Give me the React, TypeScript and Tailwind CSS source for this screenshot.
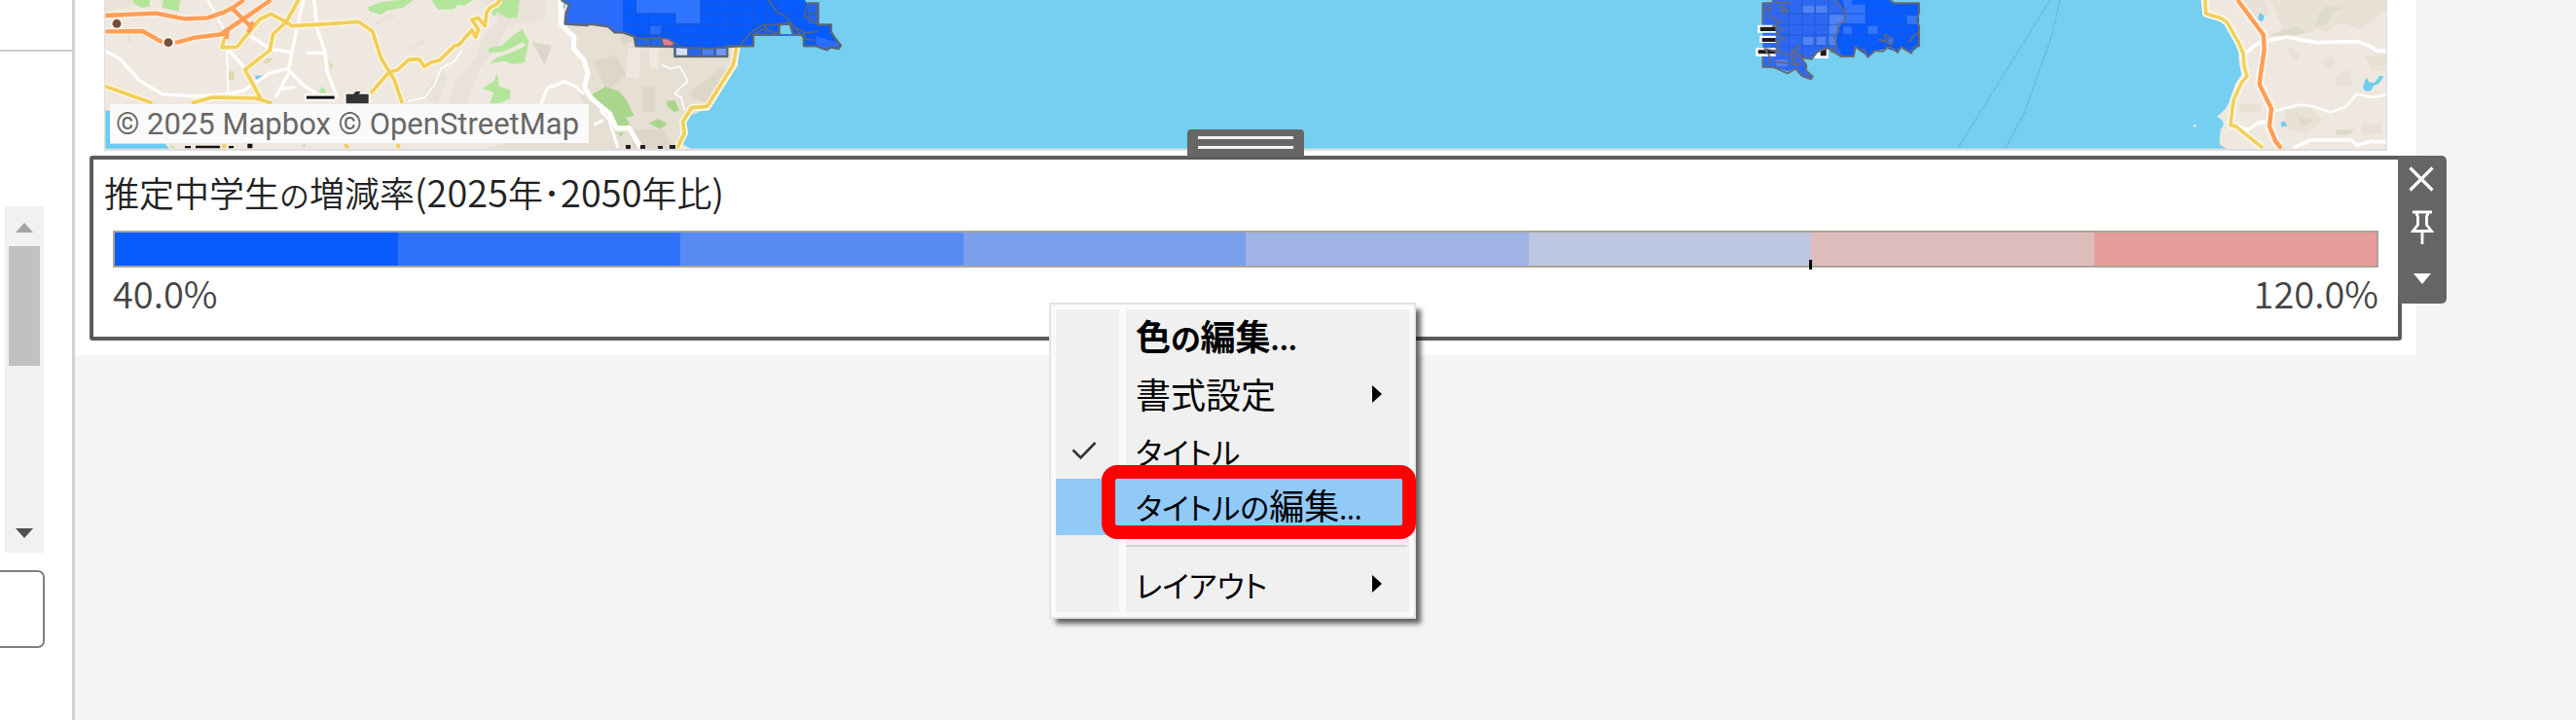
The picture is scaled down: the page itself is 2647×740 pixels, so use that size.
import type { ReactNode } from "react";

const legendSteps = [
  "bg-[#0a5cff]",
  "bg-[#3073fa]",
  "bg-[#568bf3]",
  "bg-[#7c9fec]",
  "bg-[#9fb3e4]",
  "bg-[#bdc6e0]",
  "bg-[#dfbcbc]",
  "bg-[#e69c9c]",
];

const yellowRoads = [
  "M325 266L470 318M590 318L655 300L790 303L838 318M920 0L882 68L842 105L832 155L755 215L805 306",
  "M700 90L684 146L730 145L800 60L835 43L882 68L900 80L1010 74L1105 67L1148 96L1175 180L1215 245L1240 318",
  "M1140 290L1200 222L1225 216L1260 184L1292 182L1308 205L1330 192L1355 186L1400 142L1415 138L1455 92L1466 115L1475 92L1455 60L1475 56L1495 80L1500 38L1512 22L1530 14L1542 0",
];

function WestLand() {
  return (
    <g transform="scale(0.33333)" fill="none" strokeLinejoin="round" strokeLinecap="butt">
      <g fill="#e9e2d8">
        <path d="M325 0h95l-20 24-75 8zM480 0h60l-10 18zM1150 70l60-30 10 12-60 28zM1255 150l50-28 5 10-45 20zM390 130l8-30 8 30zM1400 250l60-60 30-80 60-60 20 20-40 80-50 60-40 110-60 30zM1480 0h200v60l-120 20zM1300 300l60-90 20 30-30 80z" />
      </g>
      <path d="M1730 0L2275 150L2265 220L2180 330L2110 370L2090 458L1500 458L1700 400L1810 240L1760 110Z" fill="#e6dfd3" />
      <path d="M1830 190l70-20 30 60-60 50zM1980 265h40v80h-40zM2120 290l100-80 30 10-70 100zM1900 70l60 50-40 20zM1640 130l60 10-20 60zM1950 400l100 0 20 58h-120z" fill="#ddd6c9" />
      <path d="M1935 150l40 0-5 90-40 0zM2000 150l30 0 0 60-25 0zM1700 300l80-20 20 40-60 60zM1600 200l100 0 0 20-60 10z" fill="#efe8e0" />
      <g fill="#b3e59a">
        <path d="M410 0h52l-2 20-25 4-22-12zM503 0h52l-4 36-30-8-22-4zM1135 22l40-16 60-6h38l-30 24-50 8-20 14-36-14zM1330 0h130l-30 18-20-4-10 14-50 2zM1530 0h72l-8 55-32 0-30-18zM983 284l10-18 14 18-6 4z" />
        <path d="M1506 148l42-8 30-28 32-22 20 36-12 66-34 6-30-10-46 8 24-18 50-18 40-20-10-10-60 30-44 2zM1688 0z" />
        <path d="M1486 272l36-20 12-26 4 40 36 12-2 26-30 14h-32l12-34zM1516 36l12-14 10 8-16 22z" />
      </g>
      <path d="M1826 290l40-22 40 12 26 30 22 46-24 6 10 20-24 16-30 0-2-50-48-40zM2000 380l28-14 28 14-20 18zM2056 310l24 0 14 30-16 6-22-20zM1904 412l20-4-10 12z" fill="#a9d58c" />
      <path d="M700 220h22v26h-22zM820 180h22l-12 14-20 2zM1015 190l14 12-12 14z" fill="#ddd9ad" />
      <path d="M786 233h36l-14 12h-18zM1728 12h14v12h-14z" fill="#6fcdf0" />

      <g stroke="#ffffff" strokeWidth="10">
        <path d="M325 157L370 182L430 248L500 290L600 297L700 290L750 280L830 226L885 212L935 262L985 296" />
        <path d="M890 212L902 150L935 0M968 0L978 90L1002 160L1008 220L1040 300M945 163H1002M700 150L760 215M770 110L835 152L895 160M850 300L890 225M860 275L910 268" />
        <path d="M640 0L690 90M700 160L703 290" strokeWidth="6" />
        <path d="M1260 312L1310 300L1340 260L1360 210L1400 190L1425 155" strokeWidth="5" />
      </g>
      <g stroke="#ffffff" strokeWidth="15">
        <path d="M1728 0L1730 75L1770 115L1768 150L1800 185L1812 225L1802 270L1820 300L1855 330L1880 350L1900 395L1940 395L1975 455" />
        <path d="M1800 290L1775 268L1740 250L1710 265L1688 270L1668 320M1850 340L1878 370L1890 410L1905 455M1830 385L1860 370" strokeWidth="9" />
        <path d="M2040 200L2070 212L2095 205L2108 225L2120 250L2098 270L2080 290L2100 300L2110 340" strokeWidth="5" />
      </g>

      <g stroke="#fdf6dd" strokeWidth="20">
        {yellowRoads.map((d) => (
          <path key={d} d={d} />
        ))}
      </g>
      <g stroke="#f1ce5a" strokeWidth="11">
        {yellowRoads.map((d) => (
          <path key={d} d={d} />
        ))}
      </g>

      <g stroke="#fff1e4" strokeWidth="22">
        <path d="M325 48L480 41L570 58L640 55L690 38L720 22L752 0M325 97L440 96L500 130M540 132L600 116L690 105" />
        <path d="M715 25L770 82M690 105L745 62L835 0" />
      </g>
      <g stroke="#ff9e57" strokeWidth="13">
        <path d="M325 48L480 41L570 58L640 55L690 38L720 22L752 0M325 97L440 96L500 130M540 132L600 116L690 105L700 90" />
        <path d="M712 22L775 84M680 106L745 62L835 0M765 100L780 68M698 120L702 90" />
      </g>
      <g fill="#75503a" stroke="#fff7f0" strokeWidth="5">
        <circle cx="360" cy="73" r="16" />
        <circle cx="519" cy="131" r="16" />
      </g>

      <path d="M325 341h14v102h170l12 15H325z" fill="#6bcbf0" />
      <path d="M938 288h100v24h-100zM1060 285h84v34h-84z" fill="#f7f3ee" />
      <path d="M945 296h86v9h-86z" fill="#111111" />
      <path d="M1067 290h22l8-8h14l-4 8h29v29h-69z" fill="#333333" />
      <path d="M570 450h18v7h-18zM603 449h75v8h-75zM705 450h15v7h-15zM763 443h15v14h-15z" fill="#111111" />
      <path d="M685 445h12v12h-12zM1060 444l12 0 4 13h-12zM1222 443h12v14h-12z" fill="#f1ce5a" />
      <path d="M522 445l18 12h-10zM930 447l14-4-6 12z" fill="#b3e59a" />
    </g>
  );
}

function Sea() {
  return (
    <g transform="scale(0.33333)">
      <path
        d="M2270 0V150L2275 200L2190 330L2150 347L2125 358L2110 390L2115 415L2095 440L2130 458H6865L6845 448L6842 440L6845 400L6855 385L6850 370L6835 360L6860 335L6872 315L6890 260L6910 230L6902 190L6900 150L6862 78L6835 62L6790 45L6785 0Z"
        fill="#75cff0"
      />
      <g fill="none" strokeLinejoin="round">
        <path d="M2272 140L2262 200L2180 330L2132 332L2105 375L2110 410L2088 456" stroke="#fdf6dd" strokeWidth="22" />
        <path d="M2272 140L2260 200L2180 328L2132 332L2105 375L2110 410L2088 456" stroke="#f1ce5a" strokeWidth="11" />
        <path d="M6320 0L6035 458M6350 0L6325 110L6240 350L6182 458" stroke="#62b8e6" strokeWidth="4" strokeDasharray="16 4" />
      </g>
      <path d="M6762 384h8v7h-8z" fill="#efe8e0" />
    </g>
  );
}

function EastLand() {
  return (
    <g transform="translate(2100 0) scale(0.33333)" fill="none" strokeLinejoin="round">
      <g fill="#e8e1d6">
        <path d="M700 0h358v30l-80 60-60-20-50 30-80-40-50 30zM720 90l60-30 60 20-10 20-80 12zM850 190l40-15 10 20-20 20zM900 240l40-30 10 50-50 10zM740 140l50 20-10 30zM600 320h70v25h-60zM990 170h65v50l-40 0zM740 340l80-10 40 40-50 40-60-10zM980 380l60 0 0 30-60 5zM590 0l90 0 20 40-40 20z" />
      </g>
      <g fill="#dedacb">
        <path d="M850 40l20-20 60 4-40 14-14 36-40 10zM780 80l30 20-40 10-80 0zM780 360l50 10-30 20zM900 400h60l-20 16h-40z" />
      </g>
      <g stroke="#ffffff" strokeWidth="11">
        <path d="M620 165L665 130L750 114L790 122L840 131L970 128L1005 142L1030 157L1055 156M590 388L630 400L660 380L690 375M770 455L825 432L950 432L965 448L1010 436L1055 438" />
        <path d="M705 345L740 335L790 322L830 328L885 346L930 330L965 290L1010 300L1055 293" strokeWidth="7" />
      </g>
      <path d="M498 0L500 42L548 56L565 68L600 130L615 165L618 205L627 235L610 255L585 310L576 386L590 388L675 456" stroke="#fff9e8" strokeWidth="22" />
      <path d="M498 0L500 42L548 56L565 68L600 130L615 165L618 205L627 235L610 255L585 310L576 386L590 388L675 456" stroke="#f0d060" strokeWidth="11" />
      <path d="M598 0L678 108L680 155L668 235L665 260L702 335L696 390L715 436L732 458" stroke="#fff6ec" strokeWidth="26" />
      <path d="M598 0L678 108L680 155L668 235L665 260L702 335L696 390L715 436L732 458" stroke="#ff9e57" strokeWidth="13" />
      <path d="M660 56l6-18 6 6 8 4-2 14-10 4zM990 250l6-10 6 12 16 4 12-14 4-8 14 0-6 12-10 12-14 6-10 16-16 2-8-12zM730 378l14-4 6 14-16 4z" fill="#6fcdf0" />
    </g>
  );
}

function WestTiles() {
  return (
    <g transform="translate(570 0) scale(0.33333)" strokeLinejoin="round">
      <path d="M20 0L45 15L35 40L32 74L100 78L110 74L165 82L185 100L210 100L245 112L250 142L370 144V174H532V142H612V106H692V76L725 72L735 106H768V142H805L840 154L850 146L875 150L882 140L862 115L852 98V76H812V10H778L770 0Z" fill="#075bff" />
      <path d="M20 0L45 15L35 40L32 74L165 80L185 98H210V0ZM806 112l70 20 0 12-44 8-26-16zM295 80h34v28h-34z" fill="#2b6dfa" />
      <path d="M250 0H448V72H374V40H250Z" fill="#2f74ff" />
      <path d="M252 118h36v22h-36zM296 118h34v22h-34zM414 150h36v22h-36zM780 12h28v26h-28zM782 46h26v28h-26z" fill="#2266ee" />
      <path d="M456 150h34v22h-34z" fill="#4a80f2" />
      <path d="M498 150h32v22h-32z" fill="#7099f4" />
      <path d="M374 148h36v24h-36z" fill="#d5defa" />
      <path d="M332 118l24 4 12 12-8 6h-24z" fill="#e78088" />
      <g fill="none" stroke="#1556e0" strokeWidth="4">
        <path d="M210 44H370M210 76H725M250 108H770M448 10H690M448 44H735M374 140H610M250 0V112M290 44V142M330 44V142M370 40V144M411 76V144M452 0V174M493 0V174M534 0V144M575 0V140M612 0V106M652 0V76M692 0V76M735 0V90" />
      </g>
      <g fill="none" stroke="#5b6675" strokeWidth="7">
        <path d="M20 0L45 15L35 40L32 74L100 78L110 74L165 82L185 100L210 100L245 112L250 142L370 144V174H532V142H612V106H692V76L725 72L735 106H768V142H805L840 154L850 146L875 150L882 140L862 115L852 98V76H812V10H778" />
        <path d="M210 100L265 120L320 116L350 120L390 146L480 150L570 142L610 95L640 78L725 72M290 116V142M330 116V142M411 148V172M452 148V172M493 148V172M652 78V106M778 10L770 50L810 74M658 0L690 42L705 45L770 120L800 124M780 42h30M735 82l40 20 40-6M610 108l36-20 46 18" strokeWidth="5" />
      </g>
    </g>
  );
}

function IslandTiles() {
  return (
    <g transform="translate(1780 0) scale(0.33333)" strokeLinejoin="round">
      <path d="M250 148h46v32h-46z" fill="#ffffff" />
      <path d="M272 150h18v22h-18z" fill="#1c1c1c" />
      <path d="M125 0V10H94V206L130 208L170 220L195 212L215 234L242 244L248 236L228 218V200L212 178L245 182L262 160L295 150L335 174H374L380 144L418 176L440 156L478 150L510 160L520 145L552 162L576 142V10H500L485 0Z" fill="#2f68f0" />
      <path d="M320 0L350 40L345 66L325 90L318 130L340 172H374L380 144L418 174L440 156L478 150L510 160L520 145L552 162L576 142V10H500L485 0Z" fill="#075bff" />
      <path d="M340 0h30v14h40v58h-70l8-40zM418 80h30v24h-30zM538 48h34v26h-34zM342 82h26v22h-26zM478 120l20-8v24h-16z" fill="#3375ff" />
      <path d="M300 46h44v20l-20 24-4 50h-24zM218 18h34v22h-34zM258 18h34v22h-34zM218 114h32v24h-32zM260 114h28v24h-28zM136 184h34v20h-34z" fill="#5283f3" />
      <g fill="none" stroke="#1d56d6" strokeWidth="4" opacity="0.6">
        <path d="M135 42H575M140 76H575M140 108H575M130 142H575M174 10V170M215 0V180M255 0V150M296 0V150M336 80V170M374 80V170M414 0V150M455 0V150M497 10V150M536 10V150" />
      </g>
      <path d="M78 77h56v24h-56zM84 110h50v22h-50zM72 148h62v26h-62z" fill="#ffffff" />
      <path d="M86 83h48v13h-48zM92 117h42v12h-42zM80 154h54v12h-54z" fill="#1c1c1c" />
      <g fill="none" stroke="#666a73" strokeWidth="6">
        <path d="M94 76V10H125V0M94 174V206L130 208L170 226L195 212L215 234L242 244L248 236L228 218V200L212 178L245 182L262 160L295 148L335 174H374L380 144L398 158L405 152L418 176L440 156L465 158L478 146L492 148L510 162L520 145L552 164L560 146L576 142V80L568 62L576 40V10H500L485 0" />
        <path d="M320 0L350 40L345 68L325 76L328 96L315 115L322 145L306 158L330 168M96 32L120 20L115 50L150 70L125 80L155 90L136 105L160 120L138 130L140 160L100 150L120 180L110 200M145 15L175 35L150 30L160 50M135 155L175 172L205 140L190 165L215 168L180 180L210 200L130 190M450 122L475 128L470 106L495 122L490 138L475 132M545 130L560 110L572 100M135 5L180 10" strokeWidth="5" />
      </g>
    </g>
  );
}

function MapView() {
  return (
    <section aria-label="Map" className="relative mx-[30px] h-[155px] overflow-hidden border-x border-b-2 border-[#dfdfdf] bg-[#efe8e0]">
      <svg viewBox="108 0 2344 153" preserveAspectRatio="xMinYMin slice" className="block h-full w-full">
        <rect x="108" width="2344" height="153" fill="#efe8e0" />
        <WestLand />
        <Sea />
        <EastLand />
        <WestTiles />
        <IslandTiles />
        <path d="M643 149h5v4h-5zM658 149h5v4h-5zM676 150h5v3h-5zM688 149h6v4h-6z" fill="#222222" />
      </svg>
      <p className="absolute bottom-[6px] left-[5px] bg-[#fafafa] pt-[2px] pr-[10px] pl-[6px] font-[Roboto,sans-serif] text-[31px] leading-[38px] whitespace-nowrap text-[#686868]">
        © 2025 Mapbox © OpenStreetMap
      </p>
    </section>
  );
}

function Toolbar() {
  return (
    <div className="absolute -top-1 left-full flex h-[152px] w-[50px] flex-col items-center rounded-r-[5px] bg-[#656565] text-white">
      <button aria-label="Close" className="flex h-[48px] w-full items-center justify-center pr-[3px]">
        <svg viewBox="0 0 26 26" className="size-[26px]" stroke="currentColor" strokeWidth="3.2" fill="none">
          <path d="M1.500 1.500l23 23M24.500 1.500l-23 23" />
        </svg>
      </button>
      <button aria-label="Pin" className="flex h-[52px] w-full items-center justify-center">
        <svg viewBox="0 0 24 36" className="h-[36px] w-[24px]" stroke="currentColor" strokeWidth="2.8" fill="none">
          <path d="M2 2h20M6.500 2v3l1 1v9l-5 6.500h19l-5-6.500V6l1-1V2M12 21.500V35" />
        </svg>
      </button>
      <button aria-label="More options" className="flex h-[52px] w-full items-center justify-center">
        <svg viewBox="0 0 18 11" className="h-[11px] w-[18px]" fill="currentColor">
          <path d="M0 0h18L9 11z" />
        </svg>
      </button>
    </div>
  );
}

type ItemProps = {
  children: ReactNode;
  checked?: boolean;
  submenu?: boolean;
  active?: boolean;
  bold?: boolean;
};

function MenuItem({ children, checked, submenu, active, bold }: ItemProps) {
  return (
    <button
      role={checked ? "menuitemcheckbox" : "menuitem"}
      aria-checked={checked}
      className={`flex h-[58px] w-full items-stretch text-left ${active ? "bg-[#91c9f7]" : ""}`}
    >
      <span className={`flex w-[65px] items-center justify-center ${active ? "" : "bg-[#f0f0f0]"}`}>
        {checked && (
          <svg viewBox="0 0 26 20" className="mr-[8px] h-[20px] w-[26px]" fill="none" stroke="#333333" strokeWidth="2.6">
            <path d="M1.500 9.500l8 8L24.500 2" />
          </svg>
        )}
      </span>
      <span
        className={`ml-[7px] flex flex-1 items-center justify-between pr-[28px] pl-[10px] ${active ? "" : "bg-[#f0f0f0]"}`}
      >
        <span className={`pb-[2px] leading-[56px] whitespace-nowrap ${bold ? "font-bold" : ""}`}>{children}</span>
        {submenu && (
          <svg viewBox="0 0 10 18" className="h-[18px] w-[10px]" fill="#000000">
            <path d="M0 0l10 9-10 9z" />
          </svg>
        )}
      </span>
    </button>
  );
}

function Kana({ children }: { children: ReactNode }) {
  return <span className="text-[31px]">{children}</span>;
}

function Dots() {
  return <span className="text-[28px]">...</span>;
}

function ContextMenu() {
  return (
    <div
      role="menu"
      className="absolute top-[147px] left-[982px] z-10 w-[377px] border-2 border-[#e3e3e3] bg-[#fafafa] p-[5px] text-[36px] text-black shadow-[6px_6px_5px_-1px_rgba(0,0,0,0.6)] [font-feature-settings:'palt']"
    >
      <MenuItem bold>
        色<Kana>の</Kana>編集<Dots />
      </MenuItem>
      <MenuItem submenu>書式設定</MenuItem>
      <MenuItem checked>
        <Kana>タイトル</Kana>
      </MenuItem>
      <MenuItem active>
        <Kana>タイトルの</Kana>編集<Dots />
      </MenuItem>
      <div role="separator" className="flex h-[21px]">
        <div className="w-[65px] bg-[#f0f0f0]" />
        <div className="ml-[7px] flex flex-1 items-center bg-[#f0f0f0]">
          <div className="mr-[2px] h-[2px] flex-1 bg-[#d2d2d2]" />
        </div>
      </div>
      <MenuItem submenu>
        <Kana>レイアウト</Kana>
      </MenuItem>
      <div className="pointer-events-none absolute top-[165px] -right-[2px] left-[52px] h-[76px] rounded-[16px] border-[14px] border-[#ff0000]" />
    </div>
  );
}

function Numeric({ children }: { children: ReactNode }) {
  return <span className="text-[38px]">{children}</span>;
}

function Legend() {
  return (
    <section className="relative mx-[15px] mt-[5px] h-[190px] rounded-[3px] border-4 border-[#5b5b5b] bg-white">
      <div className="absolute -top-[31px] left-1/2 flex h-[28px] w-[120px] -translate-x-1/2 flex-col gap-[7px] rounded-t-[4px] bg-[#666666] px-[11px] pt-[7px]">
        <div className="h-[3px] bg-[#f4f4f4]" />
        <div className="h-[3px] bg-[#f4f4f4]" />
      </div>
      <h2 className="h-[58px] pt-[9px] pl-[11px] text-[36px] leading-[48px] font-[350] whitespace-nowrap text-[#222222]">
        推定中学生<Kana>の</Kana>増減率<Numeric>(2025</Numeric>年･<Numeric>2050</Numeric>年比<Numeric>)</Numeric>
      </h2>
      <div className="mx-[20px] mt-[15px] flex h-[38px] border-2 border-[#aaa499]">
        {legendSteps.map((color, i) => (
          <div key={color} className={`relative flex-1 ${color}`}>
            {i === 6 && <div className="absolute top-[28px] -left-[2px] h-[10px] w-[3px] bg-black" />}
          </div>
        ))}
      </div>
      <div className="mx-[20px] flex justify-between text-[38px] leading-[52px] font-[350] text-[#444444]">
        <span>40.0%</span>
        <span>120.0%</span>
      </div>
      <Toolbar />
      <ContextMenu />
    </section>
  );
}

function Sidebar() {
  return (
    <aside className="flex w-[77px] shrink-0 flex-col border-r-[3px] border-[#d2d2d2] bg-white">
      <div className="h-[53px] border-b-2 border-[#cccccc]" />
      <div className="mt-[159px] ml-[5px] flex h-[356px] w-[40px] flex-col items-center bg-[#f1f1f1]">
        <button aria-label="Scroll up" className="flex h-[41px] w-full items-center justify-center pt-[3px]">
          <svg viewBox="0 0 18 10" className="h-[10px] w-[18px]" fill="#a3a3a3">
            <path d="M0 10h18L9 0z" />
          </svg>
        </button>
        <div className="h-[123px] w-[32px] bg-[#c1c1c1]" />
        <button aria-label="Scroll down" className="mt-auto flex h-[41px] w-full items-center justify-center">
          <svg viewBox="0 0 18 10" className="h-[10px] w-[18px]" fill="#505050">
            <path d="M0 0h18L9 10z" />
          </svg>
        </button>
      </div>
      <input
        aria-label="Value"
        className="mt-[18px] h-[80px] w-[46px] rounded-r-[7px] border-2 border-l-0 border-[#808080] bg-white"
      />
    </aside>
  );
}

export default function App() {
  return (
    <div className="flex min-h-screen overflow-hidden bg-[#f4f4f4] font-['Noto_Sans_CJK_JP',sans-serif]">
      <Sidebar />
      <main className="min-w-0 flex-1">
        <div className="mr-[164px] bg-white pb-[15px]">
          <MapView />
          <Legend />
        </div>
      </main>
    </div>
  );
}
